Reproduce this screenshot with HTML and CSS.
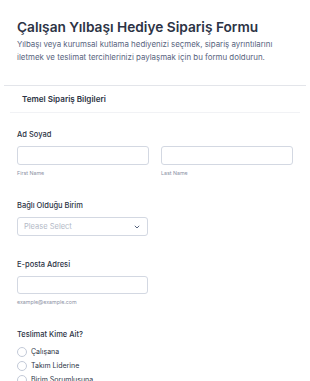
FILE: index.html
```html
<!DOCTYPE html>
<html lang="tr">
<head>
<meta charset="utf-8">
<title>Çalışan Yılbaşı Hediye Sipariş Formu</title>
<link rel="stylesheet" href="styles.css">
</head>
<body>
<div class="form">
  <header class="header">
    <h1 class="title">Çalışan Yılbaşı Hediye Sipariş Formu</h1>
    <p class="subtitle">Yılbaşı veya kurumsal kutlama hediyenizi seçmek, sipariş ayrıntılarını iletmek ve teslimat tercihlerinizi paylaşmak için bu formu doldurun.</p>
  </header>
  <hr class="divider">
  <div class="section">
    <h2 class="section-title">Temel Sipariş Bilgileri</h2>
  </div>
  <div class="fields">
    <div class="field">
      <label class="label">Ad Soyad</label>
      <div class="name-row">
        <div class="name-col">
          <div class="input"></div>
          <span class="sublabel">First Name</span>
        </div>
        <div class="name-col">
          <div class="input"></div>
          <span class="sublabel">Last Name</span>
        </div>
      </div>
    </div>
    <div class="field">
      <label class="label">Bağlı Olduğu Birim</label>
      <div class="select">
        <span class="placeholder">Please Select</span>
        <svg class="chevron" width="6" height="4" viewBox="0 0 6 4"><path d="M0.8 0.8 L3 3 L5.2 0.8" fill="none" stroke="#57647e" stroke-width="1"/></svg>
      </div>
    </div>
    <div class="field">
      <label class="label">E-posta Adresi</label>
      <div class="input input-short"></div>
      <span class="sublabel">example@example.com</span>
    </div>
    <div class="field">
      <label class="label label-radio">Teslimat Kime Ait?</label>
      <div class="radios">
        <div class="radio"><span class="circle"></span><span>Çalışana</span></div>
        <div class="radio"><span class="circle"></span><span>Takım Liderine</span></div>
        <div class="radio"><span class="circle"></span><span>Birim Sorumlusuna</span></div>
      </div>
    </div>
  </div>
</div>
</body>
</html>
```

FILE: styles.css
```css
* { box-sizing: border-box; }
html, body { margin: 0; padding: 0; background: #fff; }
body {
  font-family: Inter, "Noto Sans", sans-serif;
  color: #2c3345;
  width: 310px;
  height: 381px;
  overflow: hidden;
}
.header { padding: 17px 17px 22px; }
.title {
  margin: 0;
  font-size: 13.7px;
  line-height: 20px;
  font-weight: 600;
  color: #2c3345;
}
.subtitle {
  margin: 1px 0 0;
  font-size: 7.9px;
  line-height: 12.5px;
  color: #57647e;
}
.divider {
  margin: 0 4px;
  border: 0;
  border-top: 1px solid #e3e5ea;
  height: 0;
}
.section {
  margin: 0 10px;
  padding: 7px 12px 7px;
  border-bottom: 1px solid #f1f2f5;
}
.section-title {
  margin: 0;
  font-size: 8.1px;
  line-height: 12px;
  font-weight: 600;
  color: #2c3345;
}
.fields { padding: 16px 17px 0; }
.field { display: flex; flex-direction: column; align-items: flex-start; margin-bottom: 23px; }
.label {
  font-size: 7.5px;
  line-height: 12px;
  font-weight: 500;
  color: #2c3345;
  margin-bottom: 5px;
}
.label-radio { margin-bottom: 6px; }
.name-row { display: flex; gap: 12px; width: 276px; }
.name-col { flex: 1; display: flex; flex-direction: column; }
.input {
  height: 19px;
  width: 100%;
  border: 1px solid #d3d8e2;
  border-radius: 3px;
  background: #fff;
}
.input-short { width: 131px; height: 18px; }
.sublabel {
  margin-top: 4px;
  font-size: 5.3px;
  line-height: 8px;
  color: #8d92a5;
}
.select {
  width: 131px;
  height: 19px;
  border: 1px solid #d3d8e2;
  border-radius: 3px;
  display: flex;
  align-items: center;
  justify-content: space-between;
  padding: 0 6px 0 6px;
}
.placeholder { font-size: 7.5px; color: #b3b9c6; }
.chevron { margin-right: 1px; }
.radios { display: flex; flex-direction: column; gap: 4px; }
.radio {
  display: flex;
  align-items: center;
  gap: 4px;
  font-size: 7px;
  line-height: 10px;
  color: #2c3345;
}
.circle {
  width: 10px;
  height: 10px;
  border: 1px solid #c3cad8;
  border-radius: 50%;
  background: #fff;
}
```
